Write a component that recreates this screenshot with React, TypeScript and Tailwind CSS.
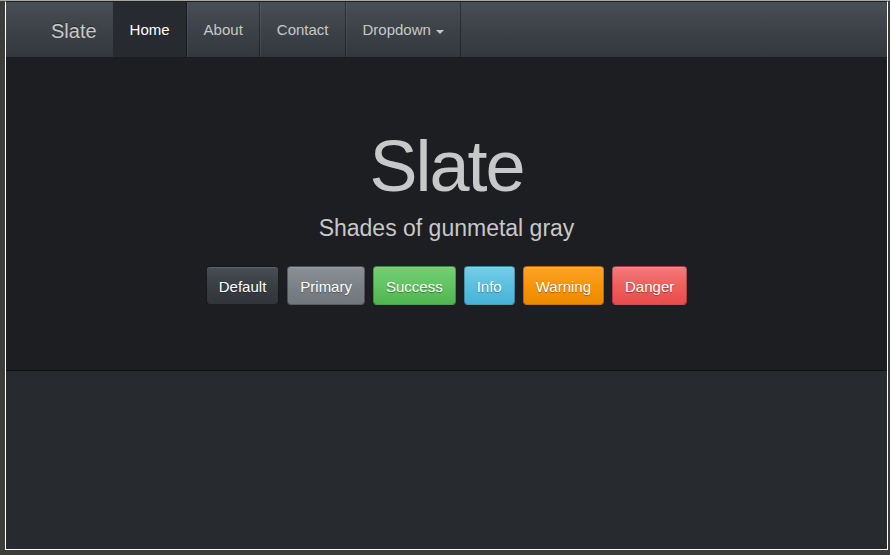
import React from 'react';

const navItems = ['Home', 'About', 'Contact'];

const buttons: { label: string; cls: string }[] = [
  { label: 'Default', cls: 'bg-gradient-to-b from-[#484e55] via-[#3a3f44] to-[#313539] border-[rgba(0,0,0,0.6)]' },
  { label: 'Primary', cls: 'bg-gradient-to-b from-[#8a9196] via-[#7a8288] to-[#70787d] border-[rgba(0,0,0,0.35)]' },
  { label: 'Success', cls: 'bg-gradient-to-b from-[#72cf71] via-[#62c462] to-[#4fb54e] border-[rgba(0,0,0,0.25)]' },
  { label: 'Info', cls: 'bg-gradient-to-b from-[#74cdea] via-[#5bc0de] to-[#45b2da] border-[rgba(0,0,0,0.25)]' },
  { label: 'Warning', cls: 'bg-gradient-to-b from-[#fba428] via-[#f89406] to-[#ee8a00] border-[rgba(0,0,0,0.25)]' },
  { label: 'Danger', cls: 'bg-gradient-to-b from-[#f27a7a] via-[#ee5f5b] to-[#e94c4c] border-[rgba(0,0,0,0.25)]' },
];

export default function App() {
  return (
    <div
      className="w-[890px] h-[555px] overflow-hidden bg-[#3c3c39] border-t border-t-[#a8a8a2]"
      style={{ fontFamily: '"Liberation Sans", Arial, sans-serif' }}
    >
      <div className="ml-[5px] w-[883px] h-[549px] flex flex-col border-l border-r border-b border-white border-t border-t-[#1e1e1e] bg-[#272b30]">
        {/* navbar */}
        <div className="h-[56px] flex items-stretch bg-gradient-to-b from-[#484e56] via-[#3d4248] to-[#33383d] border-b border-b-[#1a1c1f] shrink-0">
          <div className="flex items-center pt-[2px] pl-[45px] pr-[16px] text-[20px] text-[#c8c8c8] [text-shadow:0_-1px_0_rgba(0,0,0,0.4)]">
            Slate
          </div>
          {navItems.map((item, i) => (
            <div
              key={item}
              className={
                'flex items-center pt-[2px] px-[16px] text-[15px] border-r border-r-[rgba(0,0,0,0.35)] border-l ' +
                (i === 0
                  ? 'bg-[#272b30] text-white border-l-transparent'
                  : 'text-[#c8c8c8] border-l-[rgba(255,255,255,0.06)]')
              }
            >
              {item}
            </div>
          ))}
          <div className="flex items-center pt-[2px] px-[16px] text-[15px] text-[#c8c8c8] border-r border-r-[rgba(0,0,0,0.35)] border-l border-l-[rgba(255,255,255,0.06)]">
            Dropdown
            <span className="ml-[5px] mt-[2px] w-0 h-0 border-l-[4px] border-r-[4px] border-t-[4px] border-l-transparent border-r-transparent border-t-[#c8c8c8]" />
          </div>
        </div>

        {/* hero */}
        <div className="h-[313px] shrink-0 bg-[#1c1e22] border-b border-b-[#0e0f11] flex flex-col items-center pt-[72px]">
          <h1 className="text-[72px] leading-[72px] tracking-[-2px] text-[#c8c8c8]">Slate</h1>
          <p className="mt-[13px] text-[23px] leading-[26px] text-[#c8c8c8]">Shades of gunmetal gray</p>
          <div className="mt-[25px] flex gap-[8px]">
            {buttons.map((b) => (
              <button
                key={b.label}
                className={
                  'px-[12px] pt-[10px] pb-[8px] text-[15px] leading-[19px] text-white rounded-[4px] border [text-shadow:0_1px_1px_rgba(0,0,0,0.35)] shadow-[inset_0_1px_0_rgba(255,255,255,0.12)] ' +
                  b.cls
                }
              >
                {b.label}
              </button>
            ))}
          </div>
        </div>

        <div className="flex-1 bg-[#272b30]" />
      </div>
    </div>
  );
}
